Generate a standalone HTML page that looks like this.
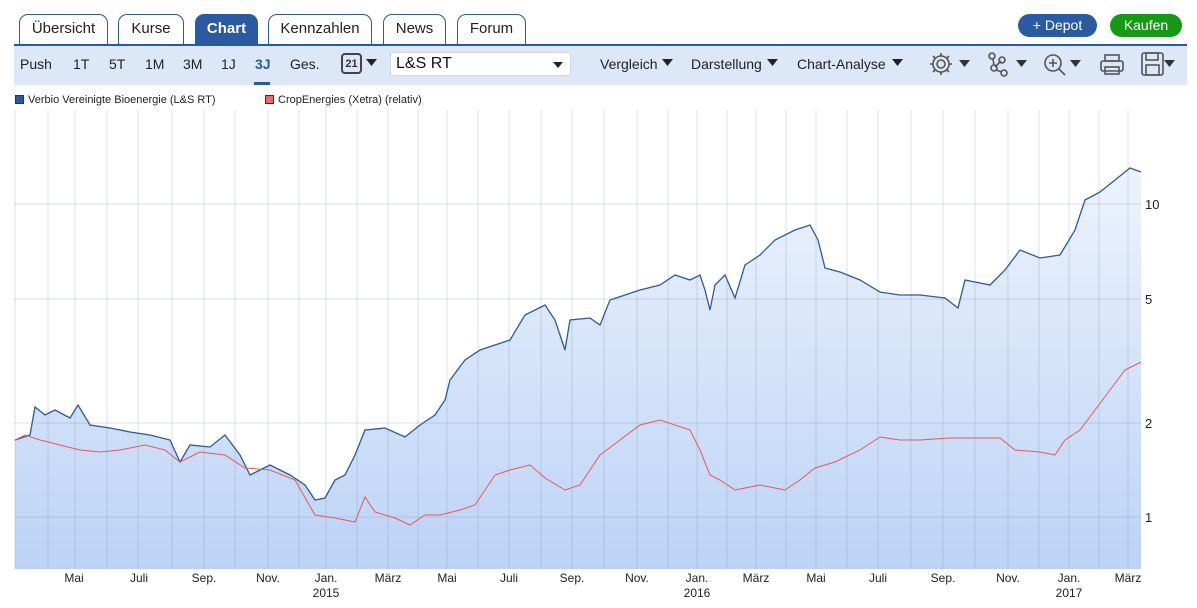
<!DOCTYPE html>
<html><head><meta charset="utf-8"><style>
*{margin:0;padding:0;box-sizing:border-box}
body{width:1197px;height:608px;background:#fff;font-family:"Liberation Sans",Arial,sans-serif;position:relative;overflow:hidden;color:#222}
.tab{position:absolute;top:14px;height:31px;border:1px solid #2a5aa0;border-bottom:none;border-radius:9px 9px 0 0;background:#fff;font-size:15px;text-align:center;line-height:28px;color:#222}
.tab.on{background:#2a5aa0;color:#fff;font-weight:bold}
.bar{position:absolute;left:14px;top:44px;width:1173px;height:41px;background:#dce8f8;border-top:2px solid #2a5aa0}
.t{position:absolute;top:56px;font-size:14px;color:#222}
.btn{position:absolute;top:14px;height:23px;border-radius:12px;color:#fff;font-size:14px;text-align:center;line-height:23px}
.lg{position:absolute;top:94px;font-size:11px;color:#222}
.sq{display:inline-block;width:9px;height:9px;border:1px solid #333;margin-right:4px;vertical-align:-1px}
.ax{position:absolute;font-size:12px;color:#222;text-align:center;width:40px;line-height:15px}
.ry{position:absolute;left:1145px;font-size:13px;color:#222}
.ar{font-size:12px}
</style></head><body>
<div class="tab" style="left:19px;width:89px">Übersicht</div>
<div class="tab" style="left:118px;width:66px">Kurse</div>
<div class="tab on" style="left:195px;width:63px">Chart</div>
<div class="tab" style="left:268px;width:104px">Kennzahlen</div>
<div class="tab" style="left:383px;width:63px">News</div>
<div class="tab" style="left:457px;width:69px">Forum</div>
<div class="btn" style="left:1018px;width:79px;background:#2a5aa0">+ Depot</div>
<div class="btn" style="left:1110px;width:72px;background:#169a16">Kaufen</div>
<div class="bar"></div>
<div class="t" style="left:20px">Push</div>
<div class="t" style="left:73px">1T</div>
<div class="t" style="left:109px">5T</div>
<div class="t" style="left:145px">1M</div>
<div class="t" style="left:183px">3M</div>
<div class="t" style="left:221px">1J</div>
<div class="t" style="left:255px;color:#2a5aa0;font-weight:bold">3J</div>
<div style="position:absolute;left:254px;top:82px;width:16px;height:3px;background:#2a5aa0"></div>
<div class="t" style="left:290px">Ges.</div>
<div style="position:absolute;left:341px;top:53px;width:21px;height:21px;border:2px solid #444;border-radius:4px;font-size:11px;font-weight:bold;text-align:center;line-height:19px;color:#333">21</div>
<svg style="position:absolute;left:366px;top:59px" width="12" height="8"><path d="M0 0h11l-5.5 7z" fill="#222"/></svg>
<div style="position:absolute;left:390px;top:52px;width:181px;height:24px;background:#fff;border:1px solid #cdd8e8;font-size:16px;line-height:22px;padding-left:5px;color:#111">L&amp;S RT<svg style="position:absolute;right:6px;top:9px" width="11" height="7"><path d="M0 0h10l-5 6z" fill="#222"/></svg></div>
<div class="t" style="left:600px">Vergleich</div><svg style="position:absolute;left:662px;top:59px" width="12" height="8"><path d="M0 0h11l-5.5 7z" fill="#222"/></svg>
<div class="t" style="left:691px">Darstellung</div><svg style="position:absolute;left:767px;top:59px" width="12" height="8"><path d="M0 0h11l-5.5 7z" fill="#222"/></svg>
<div class="t" style="left:797px">Chart-Analyse</div><svg style="position:absolute;left:892px;top:59px" width="12" height="8"><path d="M0 0h11l-5.5 7z" fill="#222"/></svg>
<svg style="position:absolute;left:928px;top:50px" width="260" height="30" fill="none" stroke="#555" stroke-width="1.6">
<circle cx="13" cy="14" r="8"/><circle cx="13" cy="14" r="4"/>
<path d="M13 3v3M13 22v3M2 14h3M21 14h3M5 6l2 2M19 20l2 2M5 22l2-2M19 8l2-2"/>
<path d="M31 10h11l-5.5 7z" fill="#333" stroke="none"/>
<circle cx="64" cy="6" r="3"/><circle cx="74" cy="10" r="3"/><circle cx="66" cy="18" r="3"/><circle cx="76" cy="23" r="3"/><path d="M65 9l1 6M67 17l6-6M68 20l6 2"/>
<path d="M88 10h11l-5.5 7z" fill="#333" stroke="none"/>
<circle cx="125" cy="13" r="8"/><path d="M131 19l6 6M125 9v8M121 13h8"/>
<path d="M142 10h11l-5.5 7z" fill="#333" stroke="none"/>
<rect x="173" y="11" width="22" height="10" rx="2"/><rect x="177" y="5" width="14" height="6"/><rect x="177" y="17" width="14" height="7"/>
<rect x="214" y="3" width="21" height="22" rx="2"/><rect x="218" y="3" width="12" height="7"/><rect x="218" y="15" width="13" height="10"/>
<path d="M236 10h11l-5.5 7z" fill="#333" stroke="none"/>
</svg>
<div class="lg" style="left:15px"><span class="sq" style="background:#2a5aa0"></span>Verbio Vereinigte Bioenergie (L&amp;S RT)</div>
<div class="lg" style="left:265px"><span class="sq" style="background:#f06a6a"></span>CropEnergies (Xetra) (relativ)</div>
<svg style="position:absolute;left:0;top:0" width="1197" height="608">
<defs><linearGradient id="g" gradientUnits="userSpaceOnUse" x1="0" y1="160" x2="0" y2="569"><stop offset="0" stop-color="#eef4fd"/><stop offset="1" stop-color="#bcd3f6"/></linearGradient></defs>
<polygon fill="url(#g)" points="15,569 15,440 30,435 35,407 45,415 55,410 70,418 78,405 90,425 110,428 130,432 150,435 170,440 180,462 190,445 210,447 225,435 240,455 250,475 270,465 290,475 305,485 315,500 325,498 335,480 345,475 355,455 365,430 385,428 405,437 420,425 435,415 445,400 450,380 465,360 480,350 495,345 510,340 525,315 545,305 555,320 565,350 570,320 590,318 600,325 610,300 625,295 640,290 660,285 675,275 690,280 700,275 705,290 710,310 715,285 725,275 735,298 745,265 760,255 775,240 795,230 810,225 818,240 825,268 840,272 860,280 880,292 900,295 920,295 945,298 958,308 965,280 990,285 1005,270 1020,250 1040,258 1060,255 1075,230 1085,200 1100,192 1115,180 1130,168 1141,172 1141,569"/>
<g stroke="#7f8fa6" stroke-opacity="0.28" stroke-width="1">
<path d="M15 110V569M48 110V569M75 110V569M107 110V569M138 110V569M172 110V569M204 110V569M235 110V569M268 110V569M299 110V569M326 110V569M357 110V569M388 110V569M418 110V569M447 110V569M478 110V569M509 110V569M541 110V569M572 110V569M604 110V569M637 110V569M668 110V569M697 110V569M727 110V569M756 110V569M786 110V569M816 110V569M847 110V569M878 110V569M911 110V569M943 110V569M975 110V569M1008 110V569M1039 110V569M1069 110V569M1099 110V569M1128 110V569"/>
<path d="M15 204H1141M15 299H1141M15 423H1141M15 517H1141"/>
</g>
<polyline fill="none" stroke="#2a5aa0" stroke-width="1.3" points="15,440 30,435 35,407 45,415 55,410 70,418 78,405 90,425 110,428 130,432 150,435 170,440 180,462 190,445 210,447 225,435 240,455 250,475 270,465 290,475 305,485 315,500 325,498 335,480 345,475 355,455 365,430 385,428 405,437 420,425 435,415 445,400 450,380 465,360 480,350 495,345 510,340 525,315 545,305 555,320 565,350 570,320 590,318 600,325 610,300 625,295 640,290 660,285 675,275 690,280 700,275 705,290 710,310 715,285 725,275 735,298 745,265 760,255 775,240 795,230 810,225 818,240 825,268 840,272 860,280 880,292 900,295 920,295 945,298 958,308 965,280 990,285 1005,270 1020,250 1040,258 1060,255 1075,230 1085,200 1100,192 1115,180 1130,168 1141,172"/>
<polyline fill="none" stroke="#e85858" stroke-width="1" points="15,440 25,435 40,440 60,445 80,450 100,452 120,450 145,445 165,450 180,462 200,452 225,455 245,468 270,470 295,480 315,515 335,518 355,522 365,497 375,512 395,518 410,525 425,515 440,515 460,510 475,505 495,475 510,470 530,465 545,478 565,490 580,485 600,455 620,440 640,425 660,420 690,430 700,450 710,475 720,480 735,490 760,485 785,490 800,480 815,468 835,462 860,450 880,437 900,440 920,440 950,438 970,438 1000,438 1015,450 1040,452 1055,455 1065,440 1080,430 1095,410 1110,390 1125,370 1141,362"/>
</svg>
<div class="ry" style="top:197px">10</div>
<div class="ry" style="top:292px">5</div>
<div class="ry" style="top:416px">2</div>
<div class="ry" style="top:510px">1</div>
<div class="ax" style="left:54px;top:571px">Mai</div>
<div class="ax" style="left:119px;top:571px">Juli</div>
<div class="ax" style="left:184px;top:571px">Sep.</div>
<div class="ax" style="left:248px;top:571px">Nov.</div>
<div class="ax" style="left:306px;top:571px">Jan.<br>2015</div>
<div class="ax" style="left:368px;top:571px">März</div>
<div class="ax" style="left:427px;top:571px">Mai</div>
<div class="ax" style="left:489px;top:571px">Juli</div>
<div class="ax" style="left:552px;top:571px">Sep.</div>
<div class="ax" style="left:617px;top:571px">Nov.</div>
<div class="ax" style="left:677px;top:571px">Jan.<br>2016</div>
<div class="ax" style="left:736px;top:571px">März</div>
<div class="ax" style="left:796px;top:571px">Mai</div>
<div class="ax" style="left:858px;top:571px">Juli</div>
<div class="ax" style="left:923px;top:571px">Sep.</div>
<div class="ax" style="left:988px;top:571px">Nov.</div>
<div class="ax" style="left:1049px;top:571px">Jan.<br>2017</div>
<div class="ax" style="left:1108px;top:571px">März</div>
</body></html>
